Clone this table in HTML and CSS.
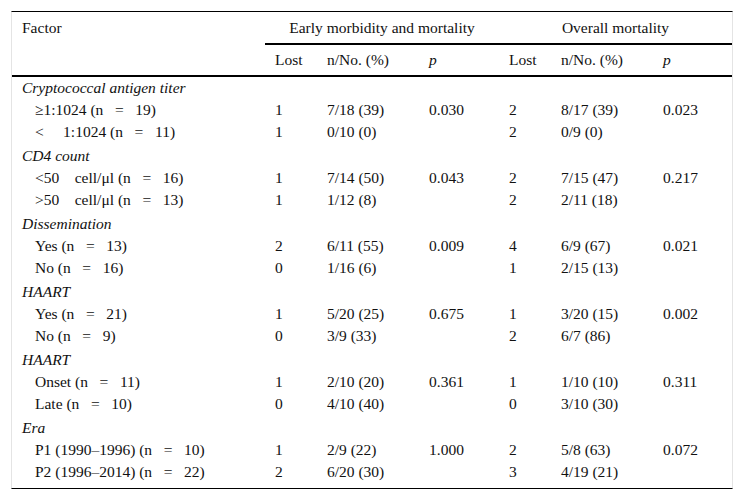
FILE: index.html
```html
<!DOCTYPE html>
<html>
<head>
<meta charset="utf-8">
<link rel="stylesheet" href="styles.css">
</head>
<body>
<div class="wrap">
<table class="tbl">
  <colgroup>
    <col class="c1"><col class="c2"><col class="c3"><col class="c4"><col class="c5"><col class="c6"><col class="c7">
  </colgroup>
  <thead>
    <tr class="h1">
      <th rowspan="2" class="factor">Factor</th>
      <th colspan="3" class="grp grp1">Early morbidity and mortality</th>
      <th colspan="3" class="grp grp2">Overall mortality</th>
    </tr>
    <tr class="h2">
      <th>Lost</th><th>n/No. (%)</th><th><i>p</i></th>
      <th>Lost</th><th>n/No. (%)</th><th><i>p</i></th>
    </tr>
  </thead>
  <tbody>
    <tr class="cat first"><td colspan="7"><i>Cryptococcal antigen titer</i></td></tr>
    <tr><td class="ind">≥1:1024 (n&ensp; =&ensp; 19)</td><td>1</td><td>7/18 (39)</td><td>0.030</td><td>2</td><td>8/17 (39)</td><td>0.023</td></tr>
    <tr><td class="ind">&lt;&ensp;&ensp; 1:1024 (n&ensp; =&ensp; 11)</td><td>1</td><td>0/10 (0)</td><td></td><td>2</td><td>0/9 (0)</td><td></td></tr>
    <tr class="cat"><td colspan="7"><i>CD4 count</i></td></tr>
    <tr><td class="ind">&lt;50&emsp;cell/μl (n&ensp; =&ensp; 16)</td><td>1</td><td>7/14 (50)</td><td>0.043</td><td>2</td><td>7/15 (47)</td><td>0.217</td></tr>
    <tr><td class="ind">&gt;50&emsp;cell/μl (n&ensp; =&ensp; 13)</td><td>1</td><td>1/12 (8)</td><td></td><td>2</td><td>2/11 (18)</td><td></td></tr>
    <tr class="cat"><td colspan="7"><i>Dissemination</i></td></tr>
    <tr><td class="ind">Yes (n&ensp; =&ensp; 13)</td><td>2</td><td>6/11 (55)</td><td>0.009</td><td>4</td><td>6/9 (67)</td><td>0.021</td></tr>
    <tr><td class="ind">No (n&ensp; =&ensp; 16)</td><td>0</td><td>1/16 (6)</td><td></td><td>1</td><td>2/15 (13)</td><td></td></tr>
    <tr class="cat"><td colspan="7"><i>HAART</i></td></tr>
    <tr><td class="ind">Yes (n&ensp; =&ensp; 21)</td><td>1</td><td>5/20 (25)</td><td>0.675</td><td>1</td><td>3/20 (15)</td><td>0.002</td></tr>
    <tr><td class="ind">No (n&ensp; =&ensp; 9)</td><td>0</td><td>3/9 (33)</td><td></td><td>2</td><td>6/7 (86)</td><td></td></tr>
    <tr class="cat"><td colspan="7"><i>HAART</i></td></tr>
    <tr><td class="ind">Onset (n&ensp; =&ensp; 11)</td><td>1</td><td>2/10 (20)</td><td>0.361</td><td>1</td><td>1/10 (10)</td><td>0.311</td></tr>
    <tr><td class="ind">Late (n&ensp; =&ensp; 10)</td><td>0</td><td>4/10 (40)</td><td></td><td>0</td><td>3/10 (30)</td><td></td></tr>
    <tr class="cat"><td colspan="7"><i>Era</i></td></tr>
    <tr><td class="ind">P1 (1990–1996) (n&ensp; =&ensp; 10)</td><td>1</td><td>2/9 (22)</td><td>1.000</td><td>2</td><td>5/8 (63)</td><td>0.072</td></tr>
    <tr class="last"><td class="ind">P2 (1996–2014) (n&ensp; =&ensp; 22)</td><td>2</td><td>6/20 (30)</td><td></td><td>3</td><td>4/19 (21)</td><td></td></tr>
  </tbody>
</table>
</div>
</body>
</html>
```

FILE: styles.css
```css
html, body {
  margin: 0;
  padding: 0;
  background: #ffffff;
}
.wrap {
  padding: 11px 11px 0 11px;
}
.tbl {
  width: 722px;
  table-layout: fixed;
  border-collapse: separate;
  border-spacing: 0;
  font-family: "Liberation Serif", "Times New Roman", "DejaVu Serif", serif;
  font-size: 15.5px;
  color: #111;
  border-top: 1px solid #000;
  border-bottom: 1px solid #000;
  border-left: 1px solid #e4e4e4;
  border-right: 1px solid #e4e4e4;
}
.c1 { width: 253px; }
.c2 { width: 52px; }
.c3 { width: 102px; }
.c4 { width: 80px; }
.c5 { width: 52px; }
.c6 { width: 102px; }
.c7 { width: 79px; }
th {
  font-weight: normal;
  text-align: left;
  padding: 0 0 0 10px;
  white-space: nowrap;
}
td {
  text-align: left;
  padding: 0 0 0 10px;
  height: 22px;
  line-height: 22px;
  white-space: nowrap;
}
.h1 th {
  height: 31px;
  vertical-align: middle;
}
.h1 .factor {
  vertical-align: top;
  padding-top: 7px;
  border-bottom: 2px solid #000;
}
.grp {
  text-align: center;
  border-bottom: 2px solid #000;
  padding-left: 0;
}
.h2 th {
  height: 30px;
  border-bottom: 2px solid #000;
}
.cat td {
  padding-top: 2px;
  line-height: 22px;
  height: 22px;
}
.cat.first td {
  padding-top: 0;
}
.ind {
  padding-left: 23px;
}
.last td {
  padding-bottom: 5px;
}
```
